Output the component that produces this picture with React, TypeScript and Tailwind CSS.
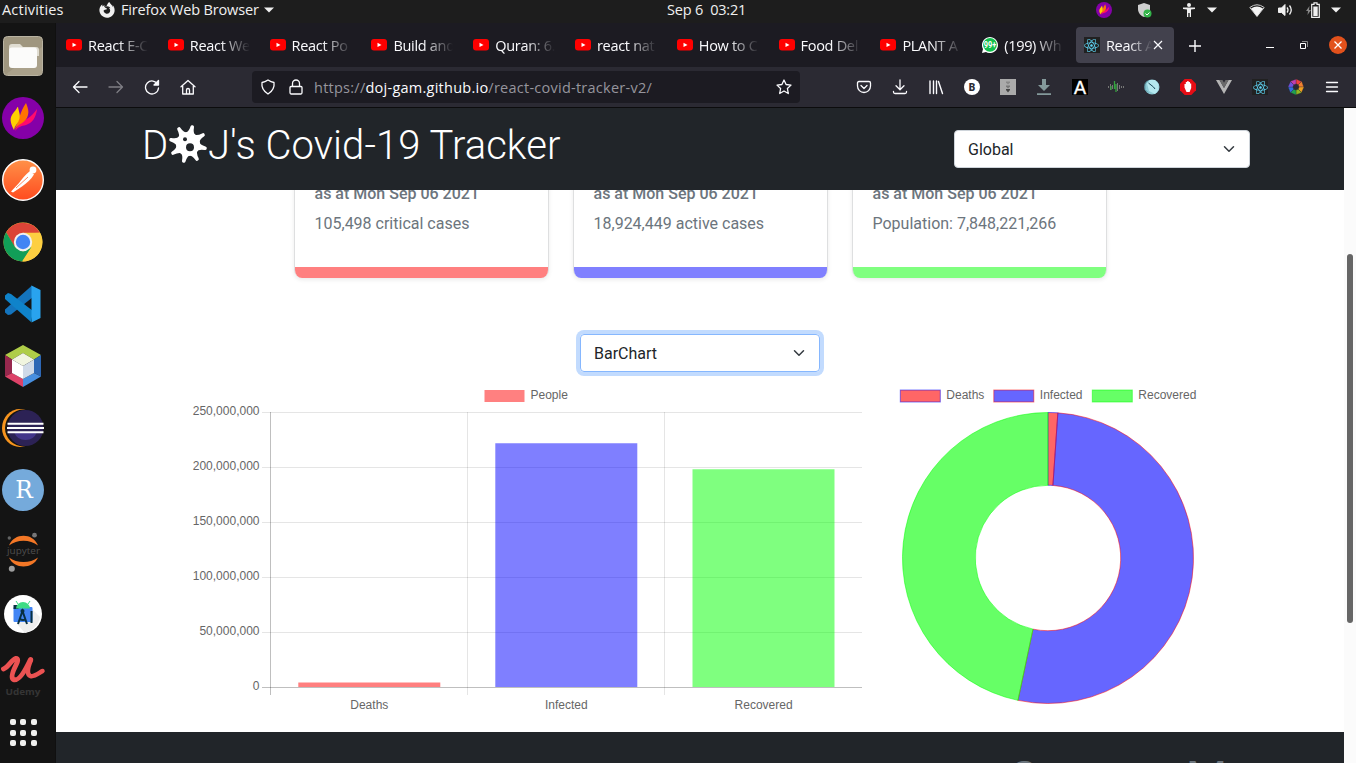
import React from "react";
import { FaReact, FaFirefoxBrowser } from "react-icons/fa";

const ui = "font-['Open_Sans','Noto_Sans',sans-serif]";

function Flame({ className }: { className: string }) {
  return (
    <svg viewBox="0 0 42 42" className={className}>
      <circle cx="21" cy="21" r="21" fill="#8500a8" />
      <path d="M13 34C17 23 26 25 35 12c-1 9-5 14-11 16-5 1-8 2-11 6Z" fill="#ff0a6c" />
      <path d="M12 33c5-8 6-19 12-27 2 5 3 8 2 12-2 8-9 8-14 15Z" fill="#ff7300" />
      <path d="M12 33c-4-8-5-12 0-18 3-3 3-5 4-5 1 6 3 8 1 13-2 5-4 5-5 10Z" fill="#ffd000" />
    </svg>
  );
}

function Dock() {
  const icons = [
    <svg viewBox="0 0 42 42" className="size-[42px]">
      <rect x="1.5" y="1.5" width="39" height="39" rx="4" fill="#9f967f" stroke="#b9b3a2" />
      <path d="M3 40 40 12v26l-3 2Z" fill="#aaa18b" />
      <path d="M7 12q0-3 3-3h8l3 3h13q3 0 3 3v6H7Z" fill="#e0ddd2" />
      <rect x="7" y="12.500" width="28" height="20.500" rx="3" fill="#fbfbfa" />
    </svg>,
    <Flame className="size-[42px]" />,
    <svg viewBox="0 0 42 42" className="size-[42px]">
      <defs>
        <linearGradient id="pm" x1="0" y1="0" x2="0" y2="1">
          <stop offset="0" stopColor="#ff9148" />
          <stop offset="1" stopColor="#ff4b1f" />
        </linearGradient>
      </defs>
      <circle cx="21" cy="21" r="20.300" fill="url(#pm)" stroke="#fff" strokeWidth="1.400" />
      <circle cx="31" cy="11" r="3.400" fill="#fff" />
      <path d="m28 12 4 3.500c-3 5-7 8-12 12l-9 6-2-1 8-8.500c3-4 6-8 11-12Z" fill="#fff" />
      <path d="m14 29 12-11" stroke="#ff6a35" strokeWidth=".8" fill="none" />
    </svg>,
    <svg viewBox="0 0 42 42" className="size-[42px]">
      <circle cx="21" cy="21" r="19.500" fill="#fdcf41" />
      <path d="M4.100 11.300A19.500 19.500 0 0 1 38 11.800L21 12.500 12.500 26Z" fill="#dc4437" />
      <path d="M4.100 11.300A19.500 19.500 0 0 0 20 40.500L29.500 26 21 30.500 13 26Z" fill="#119e58" />
      <path d="M38 11.800H21l9 14-9.500 14.700A19.500 19.500 0 0 0 38 11.800Z" fill="#fdcf41" />
      <circle cx="21" cy="21" r="9.200" fill="#f1f1f1" />
      <circle cx="21" cy="21" r="7.200" fill="#4285f4" />
    </svg>,
    <svg viewBox="0 0 42 42" className="size-[42px]">
      <path d="M30 2.500 3 26.500v3l3 2.500 3-.5L31 14Z" fill="#1474bd" />
      <path d="M3 12.500v3.500l26 23 2-11L9 11 6 10Z" fill="#0f83ca" />
      <path d="M29.500 2.500 38.500 7v28l-9 4.500Z" fill="#29a3ee" />
    </svg>,
    <svg viewBox="0 0 42 42" className="size-[42px]">
      <path d="m21 0 18 10-7 4.500L21 8l-11 6.500L3 10Z" fill="#afcd48" />
      <path d="m3 10 7 4.500V28l-7 3.500Z" fill="#97284d" />
      <path d="m39 10-7 4.500V28l7 3.500Z" fill="#2d67b5" />
      <path d="m3 31.500 7-3.500 11 6v8Z" fill="#dd4268" />
      <path d="m39 31.500-7-3.500-11 6v8Z" fill="#488fe0" />
      <path d="m21 8 11 6.500L21 21l-11-6.500Z" fill="#f1f5df" />
      <path d="M10 14.500 21 21v13l-11-6Z" fill="#fff" />
      <path d="M32 14.500 21 21v13l11-6Z" fill="#d0dae8" />
    </svg>,
    <svg viewBox="0 0 42 42" className="size-[42px]">
      <ellipse cx="18" cy="21" rx="18" ry="19" fill="#f7941e" />
      <circle cx="21.500" cy="21" r="18.500" fill="#141414" />
      <circle cx="23.500" cy="21" r="18" fill="#2c2255" />
      <path d="M12 25h23q-3 8-11.500 8T12 25Z" fill="#43358a" />
      <path d="M5.500 16.700h36M5 21h37M5.500 25.300h36" stroke="#fff" strokeWidth="2" />
    </svg>,
    <svg viewBox="0 0 42 42" className="size-[42px]">
      <circle cx="21" cy="21" r="21" fill="#75aadb" />
      <text x="22" y="28.800" fontSize="25" textLength="17.500" lengthAdjust="spacingAndGlyphs" textAnchor="middle" fill="#fff" fontFamily="DejaVu Serif">R</text>
    </svg>,
    <svg viewBox="0 0 42 42" className="size-[42px]">
      <path d="M7 14.500C12 1.500 31 1.500 36 14.500 28 8 15 8 7 14.500Z" fill="#f37726" />
      <path d="M7 26.500c5 12 24 12 29 0-8 6-21 6-29 0Z" fill="#f37726" />
      <circle cx="32.500" cy="4.200" r="2.400" fill="#767677" />
      <circle cx="7.300" cy="7" r="1.700" fill="#616262" />
      <circle cx="9.800" cy="37.700" r="3" fill="#9e9e9e" />
      <text x="21.500" y="23" fontSize="9.500" textLength="33" lengthAdjust="spacingAndGlyphs" textAnchor="middle" fill="#4e4e4e" fontFamily="Open Sans">jupyter</text>
    </svg>,
    <svg viewBox="0 0 42 42" className="size-[42px]">
      <circle cx="21" cy="21" r="19" fill="#fff" />
      <path d="m30 16 8 8c-1 8-8 14-15 16l-8-9Z" fill="#eee" />
      <rect x="11.500" y="14" width="19" height="15" rx="1" fill="#4285f4" />
      <path d="M11.500 12h5v4h-5Z" fill="#083042" />
      <path d="M14 15.500a7 6.500 0 0 1 14 0Z" fill="#3ddc84" />
      <path d="m16 11-2-3m12 3 2-3" stroke="#3ddc84" />
      <path d="m16 31 4.500-13L25 31m-7-5q3 2 6 0M29.500 18v12" stroke="#083042" strokeWidth="2" fill="none" />
      <circle cx="20.500" cy="18" r="2" fill="#083042" />
    </svg>,
    <svg viewBox="0 0 42 42" className="size-[42px] overflow-visible">
      <path d="M1.500 14C7 12 9 5 13.500 3.500c3.500-.5 2 3.500.5 6.500-2.500 5-6 12.500-2.500 14.500C17 27 24 14 28.500 4.500" fill="none" stroke="#ec5252" strokeWidth="5" strokeLinejoin="round" strokeLinecap="round" />
      <path d="M29 5c-4 9-4 15-.5 16 4 1 7-2 12-5" fill="none" stroke="#ec5252" strokeWidth="4.500" strokeLinecap="round" />
      <text x="21" y="39.500" fontSize="8.500" fontWeight="700" textLength="35" lengthAdjust="spacingAndGlyphs" textAnchor="middle" fill="#353535" fontFamily="Open Sans">Udemy</text>
    </svg>,
  ];
  return (
    <aside className="flex w-14 shrink-0 flex-col items-center border-r border-[#101010] bg-[#141414] pt-0.5 pr-[9px]">
      {icons.map((icon, i) => (
        <div key={i} className="flex h-[62px] shrink-0 items-center">{icon}</div>
      ))}
      <div className="mt-3 grid grid-cols-3 gap-[4.5px]">
        {Array.from({ length: 9 }, (_, i) => (
          <span key={i} className="size-1.5 rounded-[2px] bg-[#f0f0ee]" />
        ))}
      </div>
    </aside>
  );
}

function Triangle({ className }: { className: string }) {
  return (
    <svg viewBox="0 0 10 6" className={`h-1.5 w-2.5 shrink-0 ${className}`}>
      <path d="M0 .5h10L5 5.500Z" fill="#f0f0f0" />
    </svg>
  );
}

function TopBar() {
  return (
    <div className={`flex h-[23px] shrink-0 items-center bg-[#1d1d1d] pb-[3px] text-[14.5px] text-[#f0f0f0] ${ui}`}>
      <div className="flex w-[667px] items-center pl-0.5">
        <span className="w-[97px] tracking-[0.2px]">Activities</span>
        <FaFirefoxBrowser className="mr-1.5 size-4" />
        <span className="w-[137px] whitespace-nowrap tracking-[-0.15px]">Firefox Web Browser</span>
        <Triangle className="ml-1.5" />
      </div>
      <span className="w-[429px] whitespace-pre tracking-[-0.2px]">Sep 6  03:21</span>
      <Flame className="size-4" />
      <svg viewBox="0 0 16 16" className="ml-[25px] size-4">
        <path d="m7 1 6 2v4c0 4-3 7-6 8C4 14 1 11 1 7V3Z" fill="#cfcfcf" />
        <circle cx="10.500" cy="11.500" r="4" fill="#34b44a" />
        <path d="m8.500 11.500 1.500 1.500 2.500-2.500" stroke="#fff" fill="none" />
      </svg>
      <svg viewBox="0 0 12 16" className="ml-[30px] h-4 w-3">
        <circle cx="6" cy="3" r="2" fill="#f0f0f0" />
        <path d="M0 5.500h12V7L8 7.500V15H6.700v-4H5.300v4H4V7.500L0 7Z" fill="#f0f0f0" />
      </svg>
      <Triangle className="ml-3" />
      <svg viewBox="0 0 16 16" className="ml-8 size-4">
        <path d="M.8 5.500Q8 0 15.200 5.500L8 14.500Z" fill="none" stroke="#ccc" />
        <path d="M2 6.500Q8 2.500 14 6.500L8 14.500Z" fill="#f4f4f4" />
      </svg>
      <svg viewBox="0 0 16 16" className="ml-3 size-4" fill="none" stroke="#f0f0f0">
        <path d="M1.500 6h3l3.500-3.500v11L4.500 10.500h-3Z" fill="#f0f0f0" />
        <path d="M10 5.500q2 2.500 0 5M12.500 3.500q3.500 4.500 0 9" strokeWidth="1.300" />
      </svg>
      <svg viewBox="0 0 14 16" className="ml-[13px] h-4 w-3.5">
        <path d="M3.500 4 0 9h2l-.5 4L5 8H3Z" fill="#888" />
        <path d="M8 .8h3v1.500h2.300v13H5.700v-13H8Z" fill="none" stroke="#f0f0f0" strokeWidth="1.200" />
        <path d="M7.300 4.500h4.400V14H7.300Z" fill="#f0f0f0" />
      </svg>
      <Triangle className="ml-[11px]" />
    </div>
  );
}

function YouTube() {
  return (
    <svg viewBox="0 0 16 16" className="size-4 shrink-0">
      <rect y="2" width="16" height="11.500" rx="3" fill="#f00" />
      <path d="m6.500 5.700 4 2.200-4 2.200Z" fill="#fff" />
    </svg>
  );
}

function WhatsApp() {
  return (
    <svg viewBox="0 0 16 16" className="size-4 shrink-0">
      <path d="M0 16 1 12A8 8 0 1 1 4 15Z" fill="#fff" />
      <circle cx="8" cy="7.800" r="6.900" fill="#10c04c" />
      <text x="8" y="10.800" fontSize="8.500" fontWeight="700" textLength="12.500" lengthAdjust="spacingAndGlyphs" textAnchor="middle" fill="#fff" fontFamily="Roboto">99+</text>
    </svg>
  );
}

function ReactBadge() {
  return (
    <span className="flex size-4 shrink-0 items-center justify-center bg-[#212121]">
      <FaReact className="size-[15px] text-[#5ed3f3]" />
    </span>
  );
}

const tabs = ["React E-C", "React We", "React Po", "Build and", "Quran: 6.", "react nat", "How to C", "Food Del", "PLANT A", "(199) Wh"];

function TabStrip() {
  return (
    <div className={`flex h-11 shrink-0 items-center bg-[#1c1b22] pl-0.5 text-[14.5px] text-[#fbfbfe] ${ui}`}>
      {tabs.map((t) => (
        <div key={t} className="flex w-[101.8px] shrink-0 items-center gap-1.5 pl-2">
          {t.startsWith("(") ? <WhatsApp /> : <YouTube />}
          <span className="w-[60px] overflow-hidden pt-0.5 whitespace-nowrap tracking-[-0.3px] [mask-image:linear-gradient(to_right,#000_50%,transparent)]">{t}</span>
        </div>
      ))}
      <div className="flex h-9 w-[98px] shrink-0 items-center rounded bg-[#42414d] pl-2">
        <ReactBadge />
        <span className="ml-1.5 w-[46px] overflow-hidden pt-0.5 whitespace-nowrap tracking-[-0.3px] [mask-image:linear-gradient(to_right,#000_50%,transparent)]">React A</span>
        <svg viewBox="0 0 10 10" className="ml-px size-2.5" stroke="#fbfbfe" strokeWidth="1.200">
          <path d="m1 1 8 8M9 1 1 9" />
        </svg>
      </div>
      <div className="flex w-[43px] shrink-0 justify-center pt-px">
        <svg viewBox="0 0 12 12" className="size-3" stroke="#fbfbfe" strokeWidth="1.400"><path d="M6 0v12M0 6h12" /></svg>
      </div>
      <div className="ml-[35px] flex w-9 shrink-0 justify-center pt-1"><span className="h-px w-2 bg-white" /></div>
      <div className="flex w-8 shrink-0 justify-center">
        <svg viewBox="0 0 8 8" className="size-2" fill="none" stroke="#fff"><path d="M.5 2.500h5v5h-5Z" /><path d="M2 .5h5.500V6" stroke="#888" /></svg>
      </div>
      <div className="flex w-9 shrink-0 justify-center">
        <svg viewBox="0 0 18 18" className="size-[18px]"><circle cx="9" cy="9" r="9" fill="#e2511c" /><path d="m5.500 5.500 7 7m0-7-7 7" stroke="#fff" strokeWidth="1.300" /></svg>
      </div>
    </div>
  );
}

function Line({ children, className = "" }: { children: React.ReactNode; className?: string }) {
  return (
    <svg viewBox="0 0 16 16" className={`size-4 shrink-0 ${className}`} fill="none" stroke="#fbfbfe" strokeWidth="1.300" strokeLinecap="round" strokeLinejoin="round">
      {children}
    </svg>
  );
}

const wheel = ["#f04040", "#f08030", "#f0a020", "#90b820", "#20a050", "#3070e0", "#7050e0", "#c040b0"];

function Toolbar() {
  const nav = [
    <Line><path d="M15 8H1.500M7 2.500 1.500 8 7 13.500" /></Line>,
    <Line className="opacity-40"><path d="M1 8h13.500M9 2.500 14.500 8 9 13.500" /></Line>,
    <Line><path d="M13.800 5.500A6.500 6.500 0 1 0 14.500 9" /><path d="M14.500 1.500v4.500H10Z" fill="#fbfbfe" /></Line>,
    <Line><path d="m1 7.800 7-6.300 7 6.300M2.700 7v8h10.600V7M6.500 15v-4q0-1.500 1.500-1.500t1.500 1.500v4" /></Line>,
  ];
  const extensions = [
    <Line><path d="M3 2.500h10q1.500 0 1.500 1.500v3a6.500 6.500 0 0 1-13 0V4q0-1.500 1.500-1.500ZM5 6.500l3 3 3-3" /></Line>,
    <Line><path d="M8 .8v9.500M4 6.800l4 4 4-4M1.500 12.500v.5q0 1.500 1.500 1.500h10q1.500 0 1.500-1.500v-.5" /></Line>,
    <Line><path d="M2 2v12.500M5.500 2v12.500M8.500 2v12.500M10.500 2.500l4 12" strokeWidth="1.400" /></Line>,
    <svg viewBox="0 0 16 16" className="size-4"><circle cx="8" cy="8" r="8" fill="#fff" /><text x="8" y="11.600" fontSize="10" fontWeight="900" textAnchor="middle" fill="#2b2a33" fontFamily="Roboto">B</text></svg>,
    <svg viewBox="0 0 16 16" className="size-4"><path d="M0 0h16v16H0Z" fill="#aaa" /><path d="M6 2.500h4v1L8 5.500 6 3.500Z" fill="#888" /><path d="M6 6.500h4v1L8 9.500 6 7.500Z" fill="#777" /><path d="M6 10h4v1l-2 2.500L6 11Z" fill="#444" /></svg>,
    <svg viewBox="0 0 16 16" className="size-4" fill="#84999b"><path d="M6 0h4v6h4l-6 6-6-6h4ZM1 14.200h14V16H1Z" /></svg>,
    <svg viewBox="0 0 16 16" className="size-4"><path d="M0 0h16v16H0Z" /><text x="8" y="14.500" fontSize="18" textAnchor="middle" fill="#fff" stroke="#fff" strokeWidth=".4" fontFamily="Liberation Sans">A</text></svg>,
    <svg viewBox="0 0 16 16" className="size-4" fill="none"><path d="M.5 7v2M2.500 5v6M4.500 6v4M9.500 4v8M11.500 6v4M13.500 7v2M15.500 7v2" stroke="#777" /><path d="M3 7v4M6.500 2v8M8 5v8" stroke="#35a23f" strokeWidth="1.300" /></svg>,
    <svg viewBox="0 0 16 16" className="size-4"><circle cx="8" cy="8" r="7.500" fill="#8ecbd6" /><path d="M3 4.500 6 1h5l3.500 4v6L11 15 5 12Z" fill="#b4e8ef" /><path d="m4.500 4 5 4 1.500 2" stroke="#19485b" fill="none" /><path d="M1 4.500v6l3 3M4 1.500 1.500 4" stroke="#5b9aa8" fill="none" /></svg>,
    <svg viewBox="0 0 16 16" className="size-4"><path d="M4.700 0h6.600L16 4.700v6.600L11.300 16H4.700L0 11.300V4.700Z" fill="#e60d15" /><path d="M4.500 8.500V5h1.300v-2h1.400V2h1.400v1H10v1.500h1.200v4.500l-1.600 4H6.500Z" fill="#fff" /></svg>,
    <svg viewBox="0 0 16 16" className="size-4"><path d="M0 1h3.500L8 9l4.500-8H16L8 15Z" fill="#b5b5b5" /><path d="M3.500 1H6.500L8 3.800 9.500 1h3L8 9Z" fill="#6b6b6b" /></svg>,
    <ReactBadge />,
    <svg viewBox="-8 -8 16 16" className="size-4">{wheel.map((c, i) => (<path key={c} d="M0-3.200V-8L5.500-5.500 2.200-2.200Z" fill={c} stroke="#2b2a33" strokeWidth=".3" transform={`rotate(${i * 45})`} />))}</svg>,
    <Line><path d="M2.500 3.500h11M2.500 8h11M2.500 12.500h11" /></Line>,
  ];
  return (
    <div className="flex h-[41px] shrink-0 items-center border-b border-[#0c0c0d] bg-[#2b2a33] pl-1.5">
      {nav.map((n, i) => (<div key={i} className="flex w-9 shrink-0 justify-center">{n}</div>))}
      <div className="mx-[46px] flex h-8 w-[548px] shrink-0 items-center rounded bg-[#1c1b22] px-2">
        <Line><path d="M8 1Q11 3 14 3.500 15 10.500 8 15 1 10.500 2 3.500 5 3 8 1Z" /></Line>
        <Line className="ml-3"><path d="M3 7.500h10q1 0 1 1v5q0 1.500-1 1.500H3q-1 0-1-1.500v-5q0-1 1-1ZM4.500 7V4.500a3.500 3.500 0 0 1 7 0V7" /></Line>
        <span className={`ml-2.5 flex-1 whitespace-nowrap pt-0.5 text-[14.5px] tracking-[0.25px] text-[#96959d] ${ui}`}>https://<span className="text-[#fbfbfe]">doj-gam.github.io</span>/react-covid-tracker-v2/</span>
        <Line><path d="m8 1 2.100 4.500 4.900.6-3.600 3.400.9 5L8 12l-4.300 2.500.9-5L1 6.100l4.900-.6Z" /></Line>
      </div>
      {extensions.map((n, i) => (<div key={i} className="flex w-9 shrink-0 justify-center">{n}</div>))}
    </div>
  );
}

function Chevron() {
  return (
    <svg viewBox="0 0 16 16" className="h-3 w-4" fill="none" stroke="#343a40" strokeWidth="2" strokeLinecap="round" strokeLinejoin="round">
      <path d="m2 5 6 6 6-6" />
    </svg>
  );
}

function Virus() {
  return (
    <svg viewBox="-20 -20 40 40" className="size-10 shrink-0">
      {Array.from({ length: 8 }, (_, i) => (
        <path
          key={i}
          d="M-5.500-9.500Q-2-12-1.800-17.500a1.800 1.800 0 0 1 3.600 0Q2-12 5.500-9.500L0-5Z"
          fill="#fff"
          transform={`rotate(${i * 45 + 14})`}
        />
      ))}
      <circle r="12" fill="#fff" />
      <circle cx="2" cy="3.300" r="4" fill="#212529" />
      <circle cx="-3" cy="-4.700" r="2" fill="#212529" />
    </svg>
  );
}

function BarChart() {
  const ticks = ["250,000,000", "200,000,000", "150,000,000", "100,000,000", "50,000,000", "0"];
  return (
    <svg viewBox="186 382 684 338" className="h-[338px] w-[684px] shrink-0 font-['Liberation_Sans',sans-serif] text-[12px]" fill="#666">
      <path d="M484.500 390h40v12h-40Z" fill="#ff8080" />
      <text x="530.500" y="399">People</text>
      {ticks.map((t, i) => (
        <g key={t}>
          <path d={`M262 ${412.5 + i * 55}H862`} stroke="#000" strokeOpacity={i === 5 ? 0.25 : 0.1} />
          <text x="259.500" y={415 + i * 55} textAnchor="end">{t}</text>
        </g>
      ))}
      <path d="M270.500 412v283" stroke="#000" strokeOpacity=".25" />
      <path d="M467.500 412v283M664.500 412v283" stroke="#000" strokeOpacity=".1" />
      <path d="M298.300 682.500h142v4.500h-142Z" fill="#f00" fillOpacity=".5" />
      <path d="M495.300 443.300h142V687h-142Z" fill="#00f" fillOpacity=".5" />
      <path d="M692.500 469.300h142V687h-142Z" fill="#0f0" fillOpacity=".5" />
      <g textAnchor="middle">
        <text x="369.300" y="709">Deaths</text>
        <text x="566.300" y="709">Infected</text>
        <text x="763.600" y="709">Recovered</text>
      </g>
    </svg>
  );
}

function slice(from: number, to: number) {
  const pt = (r: number, a: number) => `${1048 + r * Math.sin((a * Math.PI) / 180)} ${558 - r * Math.cos((a * Math.PI) / 180)}`;
  const large = to - from > 180 ? 1 : 0;
  return `M${pt(145.5, from)}A145.500 145.500 0 ${large} 1 ${pt(145.5, to)}L${pt(72.7, to)}A72.700 72.700 0 ${large} 0 ${pt(72.7, from)}Z`;
}

function Doughnut() {
  const parts = [
    { label: "Deaths", x: 900.3, from: 0, to: 3.88, fill: "#f00", line: "#00f" },
    { label: "Infected", x: 993.8, from: 3.88, to: 191.9, fill: "#00f", line: "#f00" },
    { label: "Recovered", x: 1092.3, from: 191.9, to: 360, fill: "#0f0", line: "#0f0" },
  ];
  return (
    <svg viewBox="890 382 316 338" className="ml-5 h-[338px] w-[316px] shrink-0 font-['Liberation_Sans',sans-serif] text-[12px]">
      {parts.map((p) => (
        <g key={p.label}>
          <rect x={p.x} y="390" width="40" height="12" fill={p.fill} fillOpacity=".6" stroke={p.line} strokeOpacity=".5" />
          <text x={p.x + 46} y="399" fill="#666">{p.label}</text>
          <path d={slice(p.from, p.to)} fill={p.fill} fillOpacity=".6" stroke={p.line} strokeOpacity=".5" />
        </g>
      ))}
    </svg>
  );
}

const cards = [
  { text: "105,498 critical cases", bar: "bg-[#ff8080]" },
  { text: "18,924,449 active cases", bar: "bg-[#8080ff]" },
  { text: "Population: 7,848,221,266", bar: "bg-[#80ff80]" },
];

function Page() {
  return (
    <div className="flex w-[1288px] shrink-0 flex-col overflow-hidden bg-white font-['Roboto',sans-serif] text-base text-[#212529]">
      <header className="flex h-[82px] shrink-0 items-center justify-between bg-[#212529] pr-[94px] pl-[84px]">
        <h1 className="flex items-center pb-2.5 text-[40px] leading-[48px] font-light whitespace-nowrap text-white">
          <span className="w-7 pt-1 pl-0.5">D</span><Virus /><span className="pt-1 tracking-[0.06px]">J's Covid-19 Tracker</span>
        </h1>
        <div className="flex h-[38px] w-[296px] items-center justify-between rounded border border-[#ced4da] bg-white pr-3 pl-[13px]"><span className="pt-0.5">Global</span><Chevron /></div>
      </header>
      <section className="flex h-[100px] shrink-0 gap-6 overflow-hidden pl-[238px]">
        {cards.map((c) => (
          <div key={c.text} className="-mt-2 flex h-24 w-[255px] shrink-0 flex-col overflow-hidden rounded-b-lg border-x border-[#dedfe0] text-[#6c757d] shadow-[0_2px_4px_rgba(0,0,0,0.08)]">
            <p className="pl-[19.5px] leading-6 font-medium">as at Mon Sep 06 2021</p>
            <p className="mt-1.5 pl-[19.5px] leading-6">{c.text}</p>
            <div className={`-mx-px mt-auto h-[11px] shrink-0 ${c.bar}`} />
          </div>
        ))}
      </section>
      <div className="mt-11 ml-[524px] flex h-[38px] w-60 shrink-0 items-center justify-between rounded border border-[#86b7fe] pr-3 pl-[13px] shadow-[0_0_0_4px_#c2dbfe]"><span className="pt-0.5">BarChart</span><Chevron /></div>
      <section className="mt-2.5 flex h-[350px] shrink-0 pl-[130px]">
        <BarChart />
        <Doughnut />
      </section>
      <footer className="h-[31px] shrink-0 overflow-hidden bg-[#212529] pt-[19px] pl-[952px] text-[47.5px] leading-[56px] whitespace-nowrap text-[#6c757d]">Contact Me</footer>
    </div>
  );
}

export default function App() {
  return (
    <div className="flex h-[763px] w-[1356px] flex-col overflow-hidden">
      <TopBar />
      <div className="flex min-h-0 flex-1">
        <Dock />
        <main className="flex w-[1300px] shrink-0 flex-col">
          <TabStrip />
          <Toolbar />
          <div className="flex min-h-0 flex-1">
            <Page />
            <div className="w-3 bg-[#fbfbfb] pt-[146px] pl-[3px]">
              <div className="h-[369px] w-1.5 rounded-full bg-[#666]" />
            </div>
          </div>
        </main>
      </div>
    </div>
  );
}
